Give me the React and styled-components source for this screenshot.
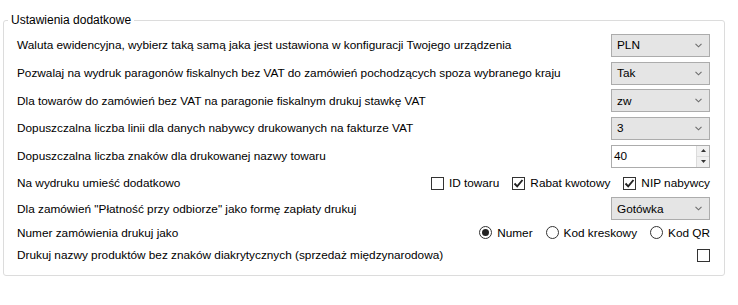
import styled, { createGlobalStyle } from 'styled-components'

const Global = createGlobalStyle`
  body {
    margin: 0;
    background: #fff;
    font-family: "Liberation Sans", Arial, sans-serif;
    font-size: 11.8px;
    color: #000;
  }
`

const Chevron = () => (
  <svg width="7" height="5" viewBox="0 0 7 5">
    <path d="M0.5 0.8 L3.5 3.8 L6.5 0.8" fill="none" stroke="#6d6d6d" strokeWidth="1.1" />
  </svg>
)

const Select = ({ value }) => (
  <Combo>
    <span>{value}</span>
    <Chevron />
  </Combo>
)

const Spinner = ({ value }) => (
  <SpinBox>
    <span>{value}</span>
    <SpinButtons>
      <SpinArrow>
        <svg width="5" height="3" viewBox="0 0 5 3"><path d="M2.5 0 L5 3 L0 3 Z" fill="#333" /></svg>
      </SpinArrow>
      <SpinArrow>
        <svg width="5" height="3" viewBox="0 0 5 3"><path d="M0 0 L5 0 L2.5 3 Z" fill="#333" /></svg>
      </SpinArrow>
    </SpinButtons>
  </SpinBox>
)

const Check = ({ checked, label }) => (
  <Option>
    <Box>
      {checked && (
        <svg width="11" height="11" viewBox="0 0 11 11">
          <path d="M1.5 5.5 L4.2 8.3 L9.5 2" fill="none" stroke="#222" strokeWidth="1.9" />
        </svg>
      )}
    </Box>
    {label && <span>{label}</span>}
  </Option>
)

const Radio = ({ checked, label }) => (
  <Option>
    <Circle>{checked && <Dot />}</Circle>
    <span>{label}</span>
  </Option>
)

export default function App() {
  const rows = [
    { h: 28, label: 'Waluta ewidencyjna, wybierz taką samą jaka jest ustawiona w konfiguracji Twojego urządzenia', control: <Select value="PLN" /> },
    { h: 28, label: 'Pozwalaj na wydruk paragonów fiskalnych bez VAT do zamówień pochodzących spoza wybranego kraju', control: <Select value="Tak" /> },
    { h: 27, label: 'Dla towarów do zamówień bez VAT na paragonie fiskalnym drukuj stawkę VAT', control: <Select value="zw" /> },
    { h: 28, label: 'Dopuszczalna liczba linii dla danych nabywcy drukowanych na fakturze VAT', control: <Select value="3" /> },
    { h: 28, label: 'Dopuszczalna liczba znaków dla drukowanej nazwy towaru', control: <Spinner value="40" /> },
    {
      h: 26,
      label: 'Na wydruku umieść dodatkowo',
      control: (
        <Options>
          <Check label="ID towaru" />
          <Check checked label="Rabat kwotowy" />
          <Check checked label="NIP nabywcy" />
        </Options>
      ),
    },
    { h: 25, label: 'Dla zamówień "Płatność przy odbiorze" jako formę zapłaty drukuj', control: <Select value="Gotówka" /> },
    {
      h: 23,
      label: 'Numer zamówienia drukuj jako',
      control: (
        <Options>
          <Radio checked label="Numer" />
          <Radio label="Kod kreskowy" />
          <Radio label="Kod QR" />
        </Options>
      ),
    },
    { h: 22, label: 'Drukuj nazwy produktów bez znaków diakrytycznych (sprzedaż międzynarodowa)', control: <Check /> },
  ]

  return (
    <>
      <Global />
      <Group>
        <Legend>Ustawienia dodatkowe</Legend>
        {rows.map((r, i) => (
          <Row key={i} $h={r.h}>
            <Label>{r.label}</Label>
            {r.control}
          </Row>
        ))}
      </Group>
    </>
  )
}

const Group = styled.fieldset`
  margin: 13px 0 0 3px;
  width: 722px;
  box-sizing: border-box;
  border: 1px solid #dcdcdc;
  border-radius: 3px;
  padding: 4px 14px 9px 13px;
`

const Legend = styled.legend`
  padding: 0 3px;
  margin-left: -9px;
  font-size: 12px;
  line-height: 14px;
`

const Row = styled.div`
  display: flex;
  align-items: center;
  justify-content: space-between;
  height: ${(p) => p.$h}px;
`

const Label = styled.span`
  white-space: nowrap;
`

const Combo = styled.div`
  width: 99px;
  height: 23px;
  box-sizing: border-box;
  border: 1px solid #acacac;
  background: #e5e5e5;
  display: flex;
  align-items: center;
  justify-content: space-between;
  padding: 0 7px 0 5px;
`

const SpinBox = styled.div`
  width: 99px;
  height: 23px;
  box-sizing: border-box;
  border: 1px solid #acacac;
  background: #fff;
  display: flex;
  align-items: center;
  justify-content: space-between;
  padding-left: 2px;
`

const SpinButtons = styled.div`
  width: 12px;
  height: 100%;
  display: flex;
  flex-direction: column;
  border-left: 1px solid #dcdcdc;
`

const SpinArrow = styled.div`
  flex: 1;
  display: flex;
  align-items: center;
  justify-content: center;
  background: #f0f0f0;
  & + & {
    border-top: 1px solid #dcdcdc;
  }
`

const Options = styled.div`
  display: flex;
  align-items: center;
  gap: 13px;
`

const Option = styled.label`
  display: flex;
  align-items: center;
  gap: 5px;
`

const Box = styled.span`
  width: 13px;
  height: 13px;
  box-sizing: border-box;
  border: 1px solid #333;
  background: #fff;
  display: flex;
  align-items: center;
  justify-content: center;
`

const Circle = styled.span`
  width: 13px;
  height: 13px;
  box-sizing: border-box;
  border: 1px solid #333;
  border-radius: 50%;
  background: #fff;
  display: flex;
  align-items: center;
  justify-content: center;
`

const Dot = styled.span`
  width: 7px;
  height: 7px;
  border-radius: 50%;
  background: #222;
`
